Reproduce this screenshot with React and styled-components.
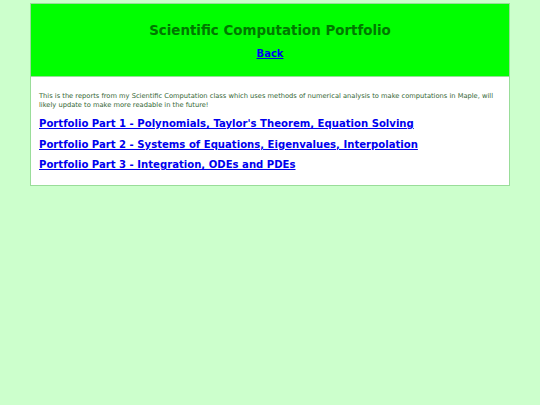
import React from "react";
import styled, { createGlobalStyle } from "styled-components";

const Global = createGlobalStyle`
  html, body { margin: 0; padding: 0; }
  body {
    background: #ccffcc;
    font-family: "DejaVu Sans", Verdana, sans-serif;
  }
`;

const Page = styled.div`
  width: 478px;
  margin: 3px auto 0;
  border: 1px solid #99dd99;
  background: #ffffff;
`;

const Header = styled.header`
  background: #00ff00;
  text-align: center;
  padding: 19px 0 16px;
  border-bottom: 1px solid #99dd99;
`;

const Title = styled.h1`
  margin: 0 0 9px;
  font-size: 13.4px;
  line-height: 16px;
  font-weight: bold;
  color: #007700;
`;

const Nav = styled.nav`
  font-size: 10px;
  line-height: 12px;
`;

const BackLink = styled.a`
  font-weight: bold;
  color: #0000ee;
  text-decoration: underline;
`;

const Content = styled.main`
  padding: 15px 8px 14px 8px;
`;

const Intro = styled.p`
  margin: 0 0 9px;
  font-size: 6.7px;
  line-height: 8.5px;
  color: #336633;
`;

const LinkList = styled.div`
  display: flex;
  flex-direction: column;
  align-items: flex-start;
  gap: 8.5px;
`;

const PartLink = styled.a`
  font-size: 10.1px;
  font-weight: bold;
  color: #0000ee;
  text-decoration: underline;
  line-height: 12px;
`;

const parts = [
  "Portfolio Part 1 - Polynomials, Taylor's Theorem, Equation Solving",
  "Portfolio Part 2 - Systems of Equations, Eigenvalues, Interpolation",
  "Portfolio Part 3 - Integration, ODEs and PDEs",
];

export default function App() {
  return (
    <>
      <Global />
      <Page>
        <Header>
          <Title>Scientific Computation Portfolio</Title>
          <Nav>
            <BackLink href="#">Back</BackLink>
          </Nav>
        </Header>
        <Content>
          <Intro>
            This is the reports from my Scientific Computation class which uses methods of numerical analysis to make computations in Maple, will likely update to make more readable in the future!
          </Intro>
          <LinkList>
            {parts.map((p) => (
              <PartLink key={p} href="#">{p}</PartLink>
            ))}
          </LinkList>
        </Content>
      </Page>
    </>
  );
}
